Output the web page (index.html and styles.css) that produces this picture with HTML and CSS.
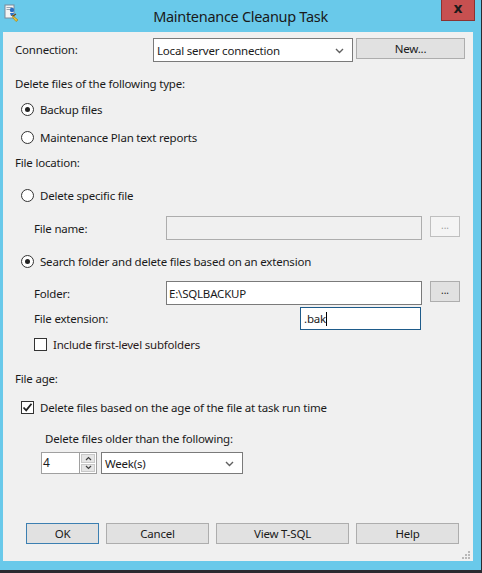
FILE: index.html
```html
<!DOCTYPE html>
<html>
<head>
<meta charset="utf-8">
<link rel="stylesheet" href="styles.css">
</head>
<body>
<div class="window">
  <div class="titlebar">
    <div class="tb-left">
      <svg class="app-icon" width="16" height="18" viewBox="0 0 16 18">
        <rect x="1" y="1" width="9" height="13" fill="#f4f4f4" stroke="#7a8a99"/>
        <rect x="2.5" y="3" width="6" height="1" fill="#9aa7b4"/>
        <rect x="2.5" y="5" width="4" height="1" fill="#9aa7b4"/>
        <circle cx="8" cy="6" r="2.2" fill="#2a6fc4"/>
        <path d="M6 9 L10 9 L9 12 L7 12 Z" fill="#2a6fc4"/>
        <path d="M8 11 L14 16 L12 17.5 L9 14 Z" fill="#e8c43a" stroke="#a07c10" stroke-width="0.6"/>
        <path d="M9 12 L12 10" stroke="#6b4a1a" stroke-width="1.2"/>
      </svg>
    </div>
    <div class="title">Maintenance Cleanup Task</div>
    <div class="tb-right">
      <div class="close">x</div>
    </div>
  </div>

  <div class="client">
    <div class="row r-conn">
      <span class="lbl-conn">Connection:</span>
      <div class="combo combo-conn"><span>Local server connection</span><svg class="chev" width="9" height="6" viewBox="0 0 9 6"><path d="M1 1 L4.5 4.5 L8 1" fill="none" stroke="#606060" stroke-width="1.4"/></svg></div>
      <div class="btn btn-new">New...</div>
    </div>

    <div class="row r-type">Delete files of the following type:</div>

    <div class="row r-backup radio-row">
      <span class="radio checked"></span><span>Backup files</span>
    </div>
    <div class="row r-maint radio-row">
      <span class="radio"></span><span>Maintenance Plan text reports</span>
    </div>

    <div class="row r-loc">File location:</div>

    <div class="row r-spec radio-row">
      <span class="radio"></span><span>Delete specific file</span>
    </div>

    <div class="row r-fname indent field-row">
      <span class="lbl-field">File name:</span>
      <div class="textbox tb-path disabled"></div>
      <div class="btn btn-browse disabled">...</div>
    </div>

    <div class="row r-search radio-row">
      <span class="radio checked"></span><span>Search folder and delete files based on an extension</span>
    </div>

    <div class="row r-folder indent field-row">
      <span class="lbl-field">Folder:</span>
      <div class="textbox tb-path">E:\SQLBACKUP</div>
      <div class="btn btn-browse">...</div>
    </div>

    <div class="row r-ext indent">
      <span class="lbl-ext">File extension:</span>
      <div class="textbox tb-ext focused">.bak<span class="caret"></span></div>
    </div>

    <div class="row r-sub indent">
      <span class="check"></span><span class="check-text">Include first-level subfolders</span>
    </div>

    <div class="row r-age">File age:</div>

    <div class="row r-agecheck radio-row">
      <span class="check checked"><svg width="11" height="11" viewBox="0 0 11 11"><path d="M1.5 5.5 L4.2 8.3 L9.5 1.8" fill="none" stroke="#222" stroke-width="1.8"/></svg></span><span class="check-text2">Delete files based on the age of the file at task run time</span>
    </div>

    <div class="row r-older">Delete files older than the following:</div>

    <div class="row r-spin">
      <div class="spin">
        <div class="spin-text">4</div>
        <div class="spin-btns">
          <div class="spin-btn"><svg width="7" height="5" viewBox="0 0 7 5"><path d="M1 4 L3.5 1.5 L6 4" fill="none" stroke="#404040" stroke-width="1.2"/></svg></div>
          <div class="spin-btn"><svg width="7" height="5" viewBox="0 0 7 5"><path d="M1 1 L3.5 3.5 L6 1" fill="none" stroke="#404040" stroke-width="1.2"/></svg></div>
        </div>
      </div>
      <div class="combo combo-unit"><span>Week(s)</span><svg class="chev" width="9" height="6" viewBox="0 0 9 6"><path d="M1 1 L4.5 4.5 L8 1" fill="none" stroke="#606060" stroke-width="1.4"/></svg></div>
    </div>

    <div class="row r-buttons">
      <div class="btn btn-ok">OK</div>
      <div class="btn btn-cancel">Cancel</div>
      <div class="btn btn-tsql">View T-SQL</div>
      <div class="btn btn-help">Help</div>
    </div>

    <div class="row r-grip">
      <svg width="8" height="8" viewBox="0 0 8 8">
        <rect x="6" y="0" width="2" height="2" fill="#b8b8b8"/>
        <rect x="3" y="3" width="2" height="2" fill="#b8b8b8"/>
        <rect x="6" y="3" width="2" height="2" fill="#b8b8b8"/>
        <rect x="0" y="6" width="2" height="2" fill="#b8b8b8"/>
        <rect x="3" y="6" width="2" height="2" fill="#b8b8b8"/>
        <rect x="6" y="6" width="2" height="2" fill="#b8b8b8"/>
      </svg>
    </div>
  </div>
</div>
</body>
</html>
```

FILE: styles.css
```css
* { box-sizing: border-box; }
html, body {
  margin: 0;
  padding: 0;
  background: #2a2a30;
  width: 482px;
  height: 573px;
  overflow: hidden;
}
body {
  font-family: "Noto Sans", "Open Sans", sans-serif;
  font-size: 11.5px;
  letter-spacing: -0.2px;
  color: #1a1a1a;
}
.window {
  width: 481px;
  height: 570px;
  background: #69c9ea;
  display: flex;
  flex-direction: column;
}
.titlebar {
  height: 32px;
  display: grid;
  grid-template-columns: 1fr auto 1fr;
  align-items: start;
}
.tb-left { padding: 4px 0 0 4px; }
.app-icon { display: block; }
.title {
  font-size: 14.5px;
  letter-spacing: -0.3px;
  color: #1a1a1a;
  padding-top: 6px;
  line-height: 20px;
}
.tb-right {
  display: flex;
  justify-content: flex-end;
  padding-right: 6px;
}
.close {
  width: 34px;
  height: 21px;
  background: #c75050;
  border: 1px solid #8b3232;
  border-top: none;
  color: #1a1a1a;
  font-family: "DejaVu Sans", sans-serif;
  font-weight: bold;
  font-size: 14px;
  letter-spacing: 0;
  line-height: 17px;
  text-align: center;
}
.client {
  margin-left: 3px;
  width: 470px;
  height: 529px;
  background: #f0f0f0;
  padding-top: 6px;
  display: flex;
  flex-direction: column;
}
.row {
  display: flex;
  align-items: center;
  height: 20px;
  padding-left: 12px;
  white-space: nowrap;
}
.radio-row { padding-left: 18px; }
.indent { padding-left: 31px; }

.r-conn { height: 24px; align-items: flex-start; }
.r-type { margin-top: 11px; }
.r-backup { margin-top: 6px; }
.r-maint { margin-top: 8px; }
.r-loc { margin-top: 5px; }
.r-spec { margin-top: 13px; }
.r-fname { margin-top: 11px; height: 24px; }
.r-search { margin-top: 11px; }
.r-folder { margin-top: 10px; height: 24px; }
.r-ext { margin-top: 2px; height: 23px; }
.r-sub { margin-top: 4px; }
.r-age { margin-top: 14px; }
.r-agecheck { margin-top: 9px; }
.r-older { margin-top: 11px; padding-left: 42px; }
.r-spin { margin-top: 4px; height: 22px; padding-left: 38px; align-items: flex-start; }
.r-buttons { margin-top: 49px; height: 21px; padding-left: 23px; gap: 7px; }
.r-grip { margin-top: 7px; height: 8px; justify-content: flex-end; padding-right: 3px; }

.lbl-conn { width: 138px; line-height: 24px; }
.combo {
  display: flex;
  align-items: center;
  justify-content: space-between;
  background: #fff;
  border: 1px solid #7a7a7a;
  padding: 0 8px 0 3px;
}
.combo-conn { width: 200px; height: 24px; }
.combo-unit { width: 142px; height: 22px; margin-left: 4px; }
.chev { display: block; margin-top: 1px; }

.btn {
  background: #e1e1e1;
  border: 1px solid #adadad;
  height: 21px;
  display: flex;
  align-items: center;
  justify-content: center;
  color: #1a1a1a;
}
.btn-new { width: 109px; margin-left: 3px; }
.btn-browse { width: 30px; margin-left: 8px; align-self: flex-start; font-size: 10px; letter-spacing: 0; padding-bottom: 3px; }
.btn-browse.disabled { background: #f4f4f4; border-color: #bfbfbf; color: #a0a0a0; }
.btn-ok { width: 73px; border-color: #3c7fb1; }
.btn-cancel { width: 103px; }
.btn-tsql { width: 133px; }
.btn-help { width: 103px; }

.radio {
  width: 13px;
  height: 13px;
  border: 1px solid #333;
  border-radius: 50%;
  background: #fff;
  margin-right: 6px;
  display: flex;
  align-items: center;
  justify-content: center;
}
.radio.checked::after {
  content: "";
  width: 5px;
  height: 5px;
  border-radius: 50%;
  background: #222;
}

.lbl-field { width: 132px; }
.lbl-ext { width: 266px; }
.textbox {
  height: 24px;
  background: #fff;
  border: 1px solid #7a7a7a;
  padding: 0 2px;
  display: flex;
  align-items: center;
}
.tb-path { width: 256px; }
.textbox.disabled { background: #f0f0f0; border-color: #adadad; }
.tb-ext { width: 121px; height: 23px; padding-left: 3px; }
.textbox.focused { border-color: #1e5b8a; }
.caret { display: inline-block; width: 1px; height: 14px; background: #000; }

.check {
  width: 13px;
  height: 13px;
  border: 1px solid #333;
  background: #fff;
  display: flex;
  align-items: center;
  justify-content: center;
}
.check svg { display: block; }
.check-text { margin-left: 6px; color: #2a1a1a; }
.check-text2 { margin-left: 6px; }

.spin { display: flex; height: 22px; }
.spin-text {
  width: 38px;
  height: 22px;
  background: #fff;
  border: 1px solid #a0a0a0;
  border-right: none;
  padding-left: 1px;
  line-height: 20px;
  font-size: 12px;
}
.spin-btns {
  width: 18px;
  height: 22px;
  border: 1px solid #a0a0a0;
  background: #fff;
  display: flex;
  flex-direction: column;
  padding: 1px;
  gap: 1px;
}
.spin-btn {
  flex: 1;
  background: #e5e5e5;
  border: 1px solid #c8c8c8;
  display: flex;
  align-items: center;
  justify-content: center;
}
.spin-btn svg { display: block; }
```
